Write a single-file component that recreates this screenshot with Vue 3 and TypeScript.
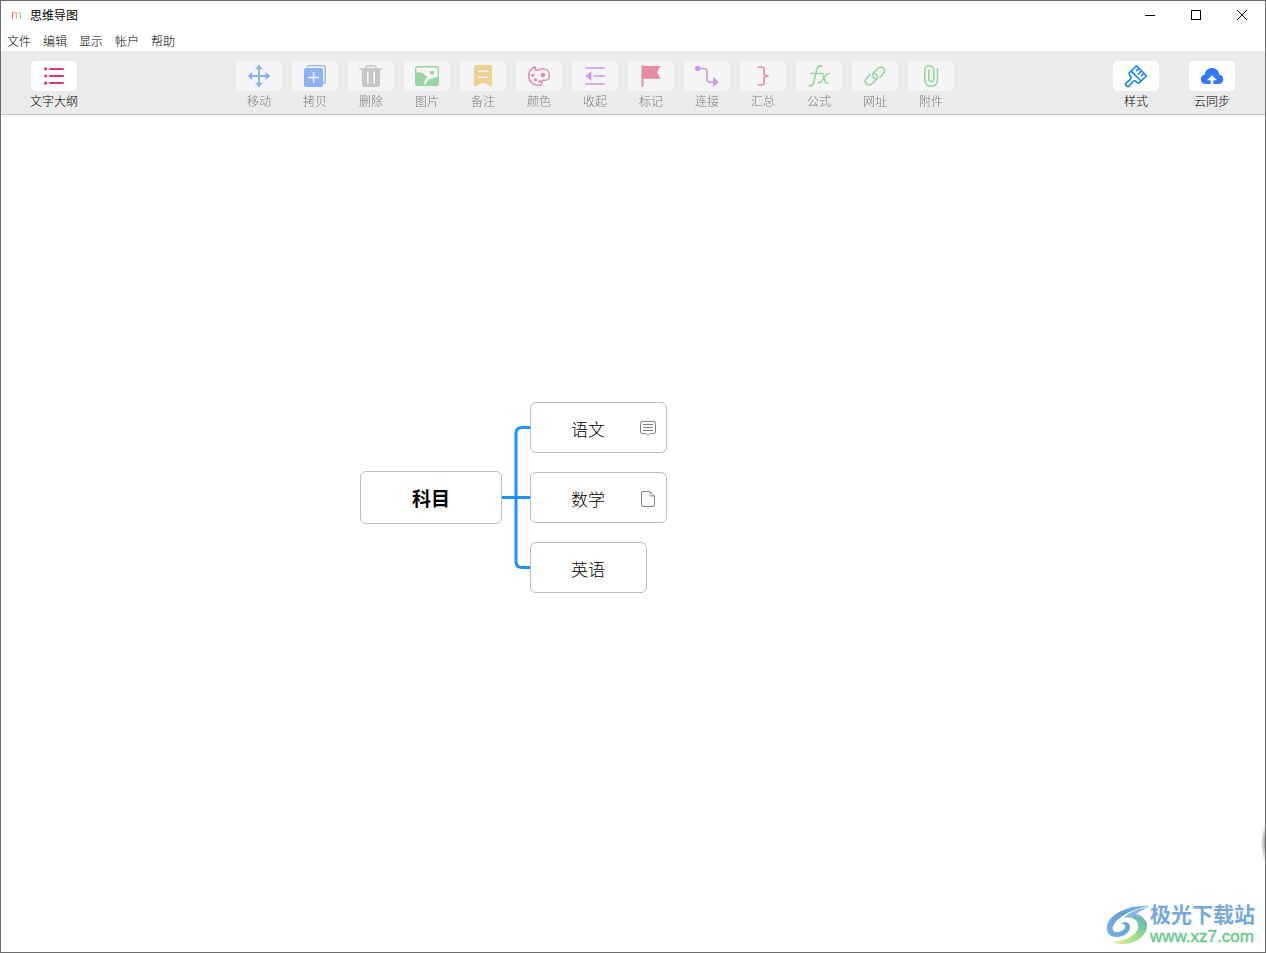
<script setup lang="ts">
interface Tool {
  id: string
  label: string
  color: string
  art: string
}

const menus: string[] = ['文件', '编辑', '显示', '帐户', '帮助']

const outlineTool: Tool = {
  id: 'outline',
  label: '文字大纲',
  color: '#e0326e',
  art: '<g fill="currentColor" stroke="none"><circle cx="3.7" cy="4.8" r="1.6"/><circle cx="3.7" cy="12" r="1.6"/><circle cx="3.7" cy="19.2" r="1.6"/></g><path d="M8 5h13M8 12h13M8 19h13" stroke-width="2"/>',
}

const editTools: Tool[] = [
  {
    id: 'move',
    label: '移动',
    color: '#2f7bff',
    art: '<path d="M12 3v18M3 12h18" stroke-width="2"/><path d="M12 .8l4 4.4H8zM12 23.2l4-4.4H8zM.8 12l4.4-4v8zM23.2 12l-4.4-4v8z" fill="currentColor" stroke="none"/>',
  },
  {
    id: 'copy',
    label: '拷贝',
    color: '#2f7bff',
    art: '<path d="M4.6 2.8q.6-1.2 2-1.2H20q2.2 0 2.2 2.2v13.4q0 1.8-1.4 2.2" stroke-width="1.4"/><path fill-rule="evenodd" d="M3.5 4h14Q20 4 20 6.500v14q0 2.500-2.500 2.500h-14Q1 23 1 20.500v-14Q1 4 3.500 4zM9.800 8.200v4.500H5.200v1.500h4.600v4.600h1.500v-4.600h4.500v-1.500h-4.500V8.200z" fill="currentColor" stroke="none"/>',
  },
  {
    id: 'delete',
    label: '删除',
    color: '#a3a3a3',
    art: '<path d="M1 5h22M7 5V3.600q0-1.600 1.600-1.600h6.800q1.600 0 1.600 1.600V5" stroke-width="1.500"/><path fill-rule="evenodd" d="M3 5h18v15.500q0 2.500-2.500 2.500h-13Q3 23 3 20.500zM8 7.500v12h1.700v-12zM14.300 7.500v12H16v-12z" fill="currentColor" stroke="none"/>',
  },
  {
    id: 'image',
    label: '图片',
    color: '#45c35e',
    art: '<rect x=".7" y="2.700" width="22.600" height="18.600" rx="2" stroke-width="1.400"/><path d="M.7 9Q6 6.500 11 11.700l1.300 1.200Q9 16 8.600 21.500H2.500Q.7 21.500.7 19.800zM10.300 21.500Q12 13.500 23.300 13v6.800q0 1.700-1.700 1.700z" fill="currentColor" stroke="none"/><circle cx="17" cy="8.700" r="2" fill="currentColor" stroke="none"/>',
  },
  {
    id: 'note',
    label: '备注',
    color: '#efbc3a',
    art: '<path fill-rule="evenodd" d="M5 1h14q2 0 2 2v19.600l-9-3.800-9 3.800V3q0-2 2-2zM6.800 6.600v1.500h10.500V6.600zM6.800 12.600v1.500h10.500v-1.500z" fill="currentColor" stroke="none"/>',
  },
  {
    id: 'color',
    label: '颜色',
    color: '#e0326e',
    art: '<path d="M8 2.700C4 4.300 1.700 8 1.700 12c0 5.600 4.500 9.400 9.600 9.400 3 0 3.800-1.200 3.400-2.600-.5-1.900.5-2.900 2.700-2.600 3.300.4 5-1.900 5-4.700 0-4-2.800-6.700-6.500-6.700-3.400 0-4.900 2.300-6.700 1.700C7.600 6 9 4.200 8 2.700z" stroke-width="1.500"/><g fill="currentColor" stroke="none"><circle cx="16" cy="11" r="2.300"/><circle cx="5.800" cy="11.300" r="1.600"/><circle cx="8.600" cy="15.600" r="1.700"/><circle cx="12.700" cy="17.500" r="1.300"/></g>',
  },
  {
    id: 'collapse',
    label: '收起',
    color: '#b44bec',
    art: '<path d="M3 4h18.500M11 12h10.500M3 20h18.500" stroke-width="1.500"/><path d="M2.600 12l5.700-5v10z" fill="currentColor" stroke="none"/>',
  },
  {
    id: 'flag',
    label: '标记',
    color: '#de2f62',
    art: '<path d="M3.500 2v20" stroke-width="2"/><path d="M3.500 2h18l-3.200 6.300 3.200 6.400h-18z" fill="currentColor" stroke="none"/>',
  },
  {
    id: 'connect',
    label: '连接',
    color: '#b44bec',
    art: '<path d="M3 4.400h6q3 0 3 3v7.800q0 3 3 3h4" stroke-width="1.500"/><circle cx="2.700" cy="4.400" r="2.700" fill="currentColor" stroke="none"/><path d="M18 13l6 5-6 5z" fill="currentColor" stroke="none"/>',
  },
  {
    id: 'summary',
    label: '汇总',
    color: '#e0326e',
    art: '<path d="M7.500 3h3q2.500 0 2.500 2.500v3.500q0 3 4 3-4 0-4 3v3.500q0 2.500-2.500 2.500h-3" stroke-width="1.700"/>',
  },
  {
    id: 'formula',
    label: '公式',
    color: '#45c35e',
    art: '<path d="M2 21.800q3.800.8 5-4.300L9.700 5.600q1-4.200 5.300-3.600M4 9.500h10.500q1.200 0 1.600 1.200l2.200 7q.4 1.300 1.600 1.300h1.500M22 9.500q-1.600-.2-2.800 1.300l-4.800 6.600q-1 1.600-3 1.500" stroke-width="1.600"/>',
  },
  {
    id: 'link',
    label: '网址',
    color: '#45c35e',
    art: '<path d="M12.800 14.900c-3.100-.5-4.400-3.700-2.200-6l4.300-4.600c1.700-1.700 4-1.700 5.500-.2s1.600 3.900 0 5.500l-3.500 3.700M11.200 9.600c3.100.5 4.400 3.600 2.200 5.900l-4.600 4.300c-1.700 1.600-4 1.600-5.400.1-1.500-1.500-1.500-3.800.1-5.400L7 10.900" stroke-width="1.600"/>',
  },
  {
    id: 'attachment',
    label: '附件',
    color: '#45c35e',
    art: '<path d="M18.500 5v10.500c0 9-12.700 9-12.700 0V6.500c0-6.300 9-6.300 9 0V15c0 3.400-5 3.400-5 0V6.500" stroke-width="1.600"/>',
  },
]

const viewTools: Tool[] = [
  {
    id: 'style',
    label: '样式',
    color: '#1384ff',
    art: '<path d="M12.500 1.800l9.900 9.900-6.900 6.900q-1.200 1-2.400 0l-1.600-1.500q-1-.8-2 .2l-4.200 4.500q-1.600 1.300-3 0t0-3l4.400-4q1-1 .2-2L5.600 11q-1-1.200 0-2.400zM7.400 7.400l9.400 9.400M15 4.300l-2.300 2.300M17.500 6.800l-3.200 3.200M20 9.300l-2.300 2.300" stroke-width="1.600"/>',
  },
  {
    id: 'sync',
    label: '云同步',
    color: '#3478f6',
    art: '<path d="M6.200 20C2.800 20 .8 17.900.8 15.200c0-2.400 1.700-4.300 4-4.700C5.200 6.600 8.200 4 12 4c3.900 0 6.800 2.600 7.200 6.500 2.400.4 4.100 2.300 4.100 4.700 0 2.700-2 4.800-5.400 4.800h-4.500v-3.800h3.700L12 11.300l-5 4.900h3.600V20z" fill="currentColor" stroke="none"/>',
  },
]

const toolGroups: { id: string; disabled: boolean; tools: Tool[] }[] = [
  { id: 'outline', disabled: false, tools: [outlineTool] },
  { id: 'edit', disabled: true, tools: editTools },
  { id: 'view', disabled: false, tools: viewTools },
]

const topics: { text: string; mark?: 'comment' | 'page' }[] = [
  { text: '语文', mark: 'comment' },
  { text: '数学', mark: 'page' },
  { text: '英语' },
]
</script>

<template>
  <div class="window">
    <header class="titlebar">
      <span class="app-logo" aria-hidden="true">m</span>
      <h1 class="title">思维导图</h1>
      <div class="controls">
        <button type="button" aria-label="最小化">
          <svg viewBox="0 0 12 12" shape-rendering="crispEdges"><path d="M1 6.500h10" /></svg>
        </button>
        <button type="button" aria-label="最大化">
          <svg viewBox="0 0 12 12" shape-rendering="crispEdges"><path d="M1.500 1.500h9v9h-9z" /></svg>
        </button>
        <button type="button" aria-label="关闭">
          <svg viewBox="0 0 12 12"><path d="M1 1l10 10M11 1L1 11" /></svg>
        </button>
      </div>
    </header>

    <nav class="menubar">
      <button v-for="menu in menus" :key="menu" type="button">{{ menu }}</button>
    </nav>

    <div class="toolbar" role="toolbar">
      <div v-for="group in toolGroups" :key="group.id" class="group" :class="group.id">
        <button
          v-for="tool in group.tools"
          :key="tool.id"
          type="button"
          class="tool"
          :disabled="group.disabled"
        >
          <span class="tile" :style="{ color: tool.color }">
            <svg viewBox="0 0 24 24" aria-hidden="true" v-html="tool.art"></svg>
          </span>
          <span class="label">{{ tool.label }}</span>
        </button>
      </div>
    </div>

    <main class="canvas">
      <div class="map">
        <div class="topic root">科目</div>
        <svg class="links" viewBox="0 0 28 191" aria-hidden="true">
          <path d="M0 95.500h28M28 25.500h-8q-6 0-6 6v128q0 6 6 6h8" />
        </svg>
        <div class="children">
          <div v-for="topic in topics" :key="topic.text" class="topic">
            <span>{{ topic.text }}</span>
            <button v-if="topic.mark === 'comment'" type="button" class="mark" aria-label="备注">
              <svg viewBox="0 0 16 16">
                <path d="M2 .5h12q1.500 0 1.500 1.500v9q0 1.500-1.500 1.500h-4L8 14.500l-2-2H2Q.5 12.500.5 11V2Q.5.5 2 .5zM3 3.500h10M3 6.500h10M3 9.500h10" />
              </svg>
            </button>
            <button v-if="topic.mark === 'page'" type="button" class="mark" aria-label="附件">
              <svg viewBox="0 0 16 16">
                <path d="M3 .5h7l4.500 4.500V14q0 1.500-1.500 1.500H3q-1.500 0-1.500-1.500V2Q1.500.5 3 .5zM10 .5v3q0 1.500 1.500 1.500h3" />
              </svg>
            </button>
          </div>
        </div>
      </div>

      <div class="watermark">
        <svg class="swirl" viewBox="0 0 44 42" aria-hidden="true">
          <defs>
            <linearGradient id="sky" x1="0" y1="1" x2="1" y2="0">
              <stop offset="0" stop-color="#76b3e3" />
              <stop offset=".6" stop-color="#5f9fd6" />
              <stop offset="1" stop-color="#8fc6ec" />
            </linearGradient>
            <linearGradient id="leaf" x1="0" y1="1" x2="1" y2="0">
              <stop offset="0" stop-color="#e9f09a" />
              <stop offset=".55" stop-color="#93d987" />
              <stop offset="1" stop-color="#5aa9d0" />
            </linearGradient>
          </defs>
          <path fill="url(#sky)" d="M44 2C24 0 3 10 1 22c-1 8 4 11 10 11 7 0 13-5 13-10 0-5-5-6-10-3 4-1 6 1 5 4-2 4-10 6-12 2C5 20 16 7 44 2z" />
          <path fill="#82b8e2" d="M44 3C30 5 22 9 18 14c8-2 17 0 21 6 1-5-3-9-9-10 4-3 8-5 14-7z" />
          <path fill="url(#leaf)" d="M22 13c7 1 11 5 10 11-2 8-13 13-26 14 15 6 35-2 35-17 0-7-8-10-19-8z" />
        </svg>
        <div class="site">
          <span class="site-name">极光下载站</span>
          <span class="site-url">www.xz7.com</span>
        </div>
      </div>
      <span class="edge-glow"></span>
    </main>
  </div>
</template>

<style>
body {
  margin: 0;
}
</style>

<style scoped>
.window {
  display: flex;
  flex-direction: column;
  box-sizing: border-box;
  min-height: 100vh;
  border: 1px solid #6d6b6c;
  background: #fff;
  color: #000;
  font: 12px/16px "Noto Sans CJK SC", sans-serif;
}

button {
  margin: 0;
  padding: 0;
  border: 0;
  background: none;
  color: inherit;
  font: inherit;
}

svg {
  display: block;
  fill: none;
  stroke: currentColor;
}

.titlebar {
  display: flex;
  align-items: center;
  height: 28px;
  padding: 0 0 1px 10px;
}

.app-logo {
  width: 19px;
  background: linear-gradient(90deg, #ec6b7c 0 2px, #f3c14b 5px, #9bd7a0 8px, #55c3f0 10px);
  background-clip: text;
  color: transparent;
  font: 13px/16px "Liberation Sans", sans-serif;
}

.title {
  margin: 0;
  font-size: 12px;
  font-weight: 400;
}

.controls {
  display: flex;
  margin-left: auto;
}

.controls button {
  display: grid;
  place-items: center;
  width: 46px;
  height: 28px;
}

.controls svg {
  width: 12px;
  height: 12px;
}

.menubar {
  display: flex;
  align-items: center;
  gap: 12px;
  height: 21px;
  padding: 0 6px;
  color: #000;
  font-weight: 300;
}

.toolbar {
  display: flex;
  justify-content: space-between;
  padding: 10px 25px 5px;
  border-bottom: 1px solid #c6c6c6;
  background: #ebebeb;
}

.group {
  display: flex;
}

.group.view {
  gap: 20px;
}

.tool {
  display: flex;
  flex-direction: column;
  align-items: center;
  gap: 2px;
  width: 56px;
  color: #000;
  font-weight: 300;
}

.tool:disabled {
  opacity: 0.5;
}

.tile {
  display: grid;
  place-items: center;
  width: 46px;
  height: 30px;
  border-radius: 5px;
  background: #fff;
}

.tile svg {
  width: 24px;
  height: 24px;
  stroke-linecap: round;
  stroke-linejoin: round;
}

.label {
  white-space: nowrap;
}

.canvas {
  position: relative;
  flex: 1;
}

.map {
  position: absolute;
  top: 287px;
  left: 359px;
  display: flex;
  align-items: center;
}

.topic {
  display: flex;
  align-items: center;
  box-sizing: border-box;
  height: 51px;
  padding: 2px 10px 0 40px;
  border: 1px solid #bcbcbc;
  border-radius: 6px;
  font-size: 17px;
  font-weight: 300;
  line-height: 24px;
}

.topic span {
  width: 65px;
}

.topic.root {
  justify-content: center;
  width: 142px;
  height: 53px;
  padding: 0;
  font-size: 19px;
  font-weight: 700;
}

.links {
  width: 28px;
  height: 191px;
  stroke: #1e90ff;
  stroke-width: 3;
}

.children {
  display: flex;
  flex-direction: column;
  align-items: flex-start;
  gap: 19px;
}

.mark {
  margin-left: 4px;
  color: #858585;
}

.mark svg {
  width: 16px;
  height: 16px;
}

.watermark {
  position: absolute;
  right: 10px;
  bottom: 5px;
  display: flex;
  align-items: center;
}

.swirl {
  width: 44px;
  height: 42px;
  stroke: none;
}

.site {
  display: flex;
  flex-direction: column;
}

.site-name {
  color: #74a9dc;
  font: 700 21px/24px "Liberation Sans", "Noto Sans CJK SC", sans-serif;
}

.site-url {
  color: #6bcb8c;
  font: 17px/20px "Liberation Sans", sans-serif;
  -webkit-text-stroke: 0.5px #6bcb8c;
}

.edge-glow {
  position: absolute;
  right: 0;
  bottom: 90px;
  width: 4px;
  height: 38px;
  background: radial-gradient(ellipse at right, rgb(0 0 0 / 40%), transparent 70%);
}
</style>
